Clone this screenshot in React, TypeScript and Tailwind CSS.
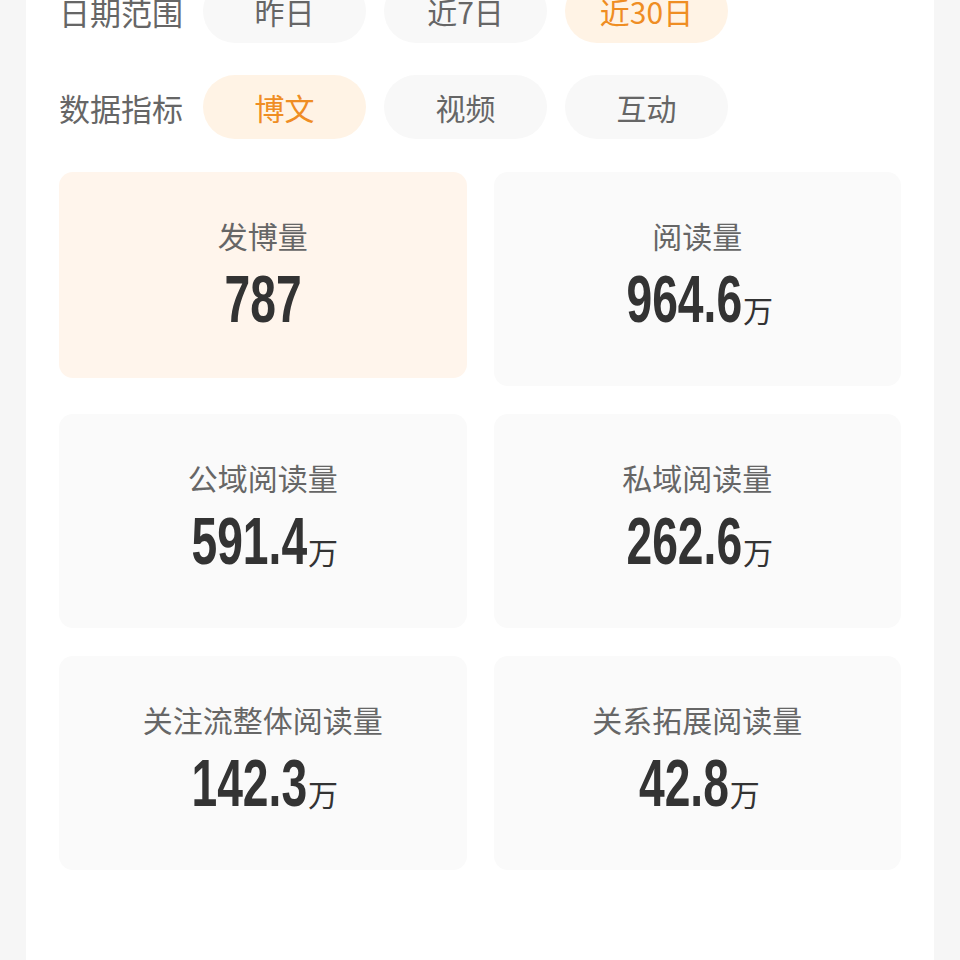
import { useState } from 'react';

type Stat = {
  label: string;
  value: string;
  unit?: string;
};

const ranges = ['昨日', '近7日', '近30日'];
const metrics = ['博文', '视频', '互动'];

const stats: Stat[] = [
  { label: '发博量', value: '787' },
  { label: '阅读量', value: '964.6', unit: '万' },
  { label: '公域阅读量', value: '591.4', unit: '万' },
  { label: '私域阅读量', value: '262.6', unit: '万' },
  { label: '关注流整体阅读量', value: '142.3', unit: '万' },
  { label: '关系拓展阅读量', value: '42.8', unit: '万' },
];

const cjk = { fontFamily: '"Noto Sans CJK SC", "Noto Sans", sans-serif' };
const num = { fontFamily: '"Liberation Sans Narrow", "Liberation Sans", sans-serif' };

const FilterRow = ({
  title,
  options,
  active,
  onPick,
}: {
  title: string;
  options: string[];
  active: string;
  onPick: (v: string) => void;
}) => (
  <div className="flex items-center gap-[18px]">
    <span className="w-[126px] text-[31px] leading-none text-[#666666]">{title}</span>
    {options.map((opt) => (
      <button
        key={opt}
        onClick={() => onPick(opt)}
        className={
          opt === active
            ? 'flex h-[64px] w-[163px] items-center justify-center rounded-full bg-[#fff3e5] text-[30px] text-[#ef8d23]'
            : 'flex h-[64px] w-[163px] items-center justify-center rounded-full bg-[#f8f8f8] text-[30px] text-[#666666]'
        }
      >
        {opt}
      </button>
    ))}
  </div>
);

export default function App() {
  const [range, setRange] = useState('近30日');
  const [metric, setMetric] = useState('博文');
  const [selected, setSelected] = useState(0);

  return (
    <div className="min-h-[960px] overflow-hidden bg-[#f6f6f6] px-[26px]" style={cjk}>
      <div className="flow-root min-h-[960px] bg-white px-[33px]">
        <div className="-mt-[21px] flex flex-col gap-[32px]">
          <FilterRow title="日期范围" options={ranges} active={range} onPick={setRange} />
          <FilterRow title="数据指标" options={metrics} active={metric} onPick={setMetric} />
        </div>

        <div className="mt-[33px] grid grid-cols-2 items-start gap-x-[27px] gap-y-[28px]">
          {stats.map((s, i) => (
            <div
              key={s.label}
              onClick={() => setSelected(i)}
              className={
                (i === selected ? 'bg-[#fff5ec] ' : 'bg-[#fafafa] ') +
                (s.unit ? 'pb-[54px] ' : 'pb-[46px] ') +
                'flex flex-col items-center rounded-[14px] pt-[42px]'
              }
            >
              <span className="text-[30px] leading-[42px] text-[#666666]">{s.label}</span>
              <div className="mt-[10px] flex h-[66px] items-baseline scale-x-[0.7]">
                <span className="text-[66px] font-bold leading-[66px] text-[#333333]" style={num}>
                  {s.value}
                </span>
                {s.unit && (
                  <span className="ml-[8px] inline-block scale-x-[1.43] text-[30px] leading-none text-[#333333]">
                    {s.unit}
                  </span>
                )}
              </div>
            </div>
          ))}
        </div>
      </div>
    </div>
  );
}
